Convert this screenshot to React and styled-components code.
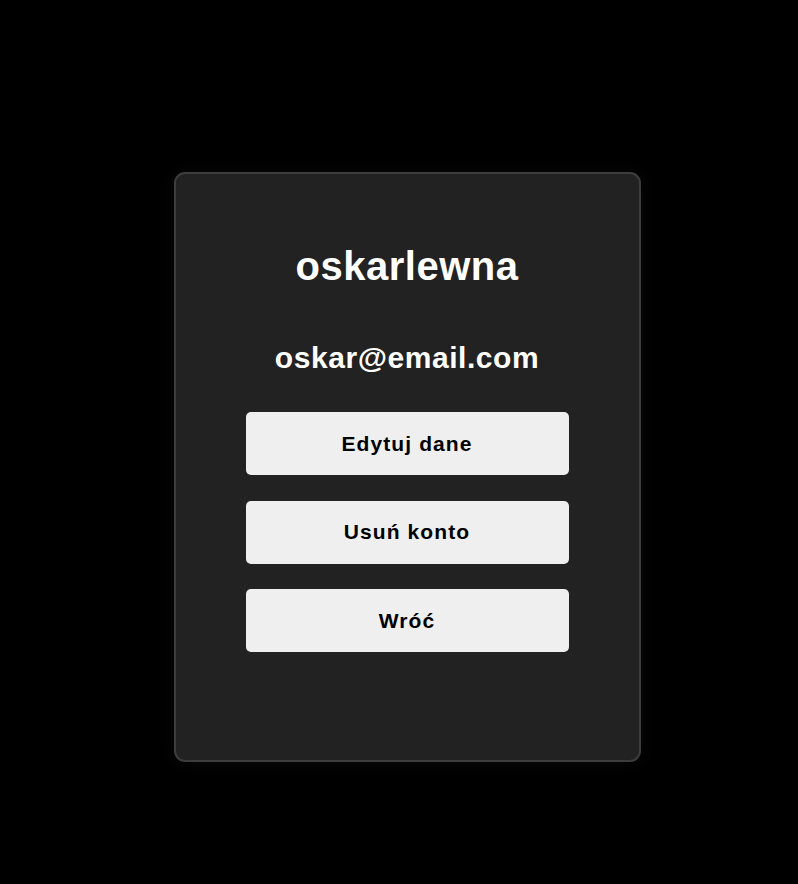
import React from "react";
import styled, { createGlobalStyle } from "styled-components";

const GlobalStyle = createGlobalStyle`
  html, body {
    margin: 0;
    padding: 0;
    background: #000;
  }
  body {
    font-family: "Liberation Sans", Arial, sans-serif;
  }
`;

function App() {
  const actions = ["Edytuj dane", "Usuń konto", "Wróć"];

  return (
    <Page>
      <GlobalStyle />
      <Card>
        <Username>oskarlewna</Username>
        <Email>oskar@email.com</Email>
        <Actions>
          {actions.map((label) => (
            <ActionButton key={label}>{label}</ActionButton>
          ))}
        </Actions>
      </Card>
    </Page>
  );
}

export default App;

const Page = styled.div`
  min-height: 884px;
  box-sizing: border-box;
  display: flex;
  justify-content: center;
  align-items: flex-start;
  padding: 172px 0 0 16px;
`;

const Card = styled.div`
  box-sizing: border-box;
  width: 467px;
  padding: 69px 0 108px;
  background: #222222;
  border: 2px solid #3d3d3d;
  border-radius: 11px;
  box-shadow: 0 0 18px rgba(60, 60, 60, 0.18);
  display: flex;
  flex-direction: column;
  align-items: center;
  color: #ffffff;
`;

const Username = styled.h1`
  margin: 0;
  font-size: 40px;
  line-height: 46px;
  font-weight: 700;
  letter-spacing: 0.5px;
`;

const Email = styled.h2`
  margin: 52px 0 0;
  font-size: 30px;
  line-height: 34.5px;
  font-weight: 700;
  letter-spacing: 0.55px;
`;

const Actions = styled.div`
  margin-top: 36.5px;
  display: flex;
  flex-direction: column;
  gap: 25.5px;
`;

const ActionButton = styled.button`
  width: 323px;
  height: 63px;
  border: none;
  border-radius: 5px;
  background: #efefef;
  color: #000;
  font-family: "Liberation Sans", Arial, sans-serif;
  font-size: 21px;
  font-weight: 700;
  letter-spacing: 1.1px;
  cursor: pointer;
`;
